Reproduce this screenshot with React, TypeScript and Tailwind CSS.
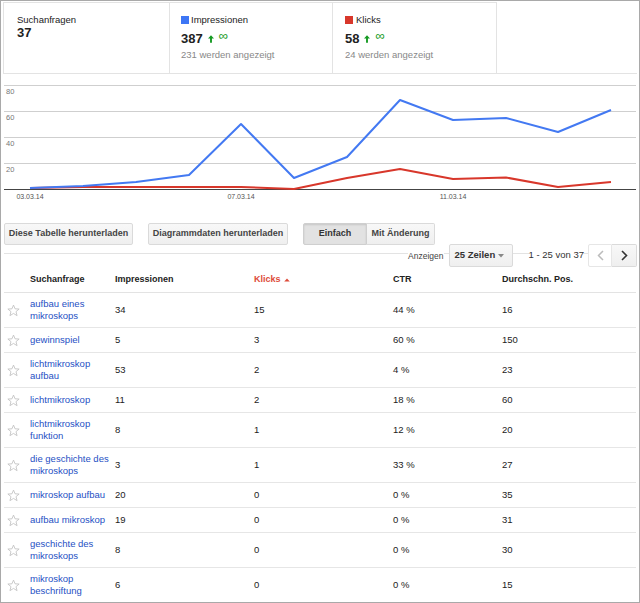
import React from 'react';

const font = "font-['Liberation_Sans',Arial,sans-serif]";

type Row = { q: string[]; imp: number; clicks: number; ctr: string; pos: number };

const rows: Row[] = [
  { q: ['aufbau eines', 'mikroskops'], imp: 34, clicks: 15, ctr: '44 %', pos: 16 },
  { q: ['gewinnspiel'], imp: 5, clicks: 3, ctr: '60 %', pos: 150 },
  { q: ['lichtmikroskop', 'aufbau'], imp: 53, clicks: 2, ctr: '4 %', pos: 23 },
  { q: ['lichtmikroskop'], imp: 11, clicks: 2, ctr: '18 %', pos: 60 },
  { q: ['lichtmikroskop', 'funktion'], imp: 8, clicks: 1, ctr: '12 %', pos: 20 },
  { q: ['die geschichte des', 'mikroskops'], imp: 3, clicks: 1, ctr: '33 %', pos: 27 },
  { q: ['mikroskop aufbau'], imp: 20, clicks: 0, ctr: '0 %', pos: 35 },
  { q: ['aufbau mikroskop'], imp: 19, clicks: 0, ctr: '0 %', pos: 31 },
  { q: ['geschichte des', 'mikroskops'], imp: 8, clicks: 0, ctr: '0 %', pos: 30 },
  { q: ['mikroskop', 'beschriftung'], imp: 6, clicks: 0, ctr: '0 %', pos: 15 },
];

function Star() {
  return (
    <svg width="13" height="13" viewBox="0 0 24 24" fill="none" stroke="#c2c2c2" strokeWidth="1.6" strokeLinejoin="round">
      <polygon points="12,2 14.9,8.9 22.4,9.3 16.6,14.1 18.6,21.5 12,17.4 5.4,21.5 7.4,14.1 1.6,9.3 9.1,8.9" />
    </svg>
  );
}

function Trend() {
  return (
    <span className="ml-[5px] inline-flex items-start text-[#159a22]">
      <svg width="6" height="8" viewBox="0 0 7 9" className="mt-[4px]">
        <path d="M3.5 0 L7 4 H4.6 V9 H2.4 V4 H0 Z" fill="#159a22" />
      </svg>
      <span className="ml-[5px] text-[13px] leading-[10px] font-normal">∞</span>
    </span>
  );
}

function Chart() {
  const xs = [30, 83, 136, 189, 241, 294, 347, 400, 453, 506, 558, 611];
  const blue = [187, 185, 181, 174, 123, 177, 156, 99, 119, 117, 131, 109];
  const red = [187, 186, 186, 186, 186, 188, 177, 168, 178, 176.5, 186, 181];
  const pts = (ys: number[]) => xs.map((x, i) => `${x},${ys[i]}`).join(' ');
  const labels = [
    { v: '80', y: 84 },
    { v: '60', y: 110 },
    { v: '40', y: 136 },
    { v: '20', y: 162 },
  ];
  return (
    <svg width="638" height="132" viewBox="1 73 638 132" className="block" fontFamily="Liberation Sans, Arial, sans-serif">
      {labels.map((l) => (
        <g key={l.v}>
          <line x1="4" x2="636" y1={l.y + 0.5} y2={l.y + 0.5} stroke="#cfcfcf" />
          <text x="6" y={l.y + 9} fontSize="7.5" fill="#777">{l.v}</text>
        </g>
      ))}
      <line x1="4" x2="636" y1="188.5" y2="188.5" stroke="#444" />
      <polyline points={pts(red)} fill="none" stroke="#d8372b" strokeWidth="2" strokeLinejoin="round" />
      <polyline points={pts(blue)} fill="none" stroke="#4379f2" strokeWidth="2" strokeLinejoin="round" />
      {[
        { x: 30, t: '03.03.14' },
        { x: 241, t: '07.03.14' },
        { x: 453, t: '11.03.14' },
      ].map((d) => (
        <text key={d.t} x={d.x} y="198" fontSize="7" fill="#555" textAnchor="middle">{d.t}</text>
      ))}
    </svg>
  );
}

const grid = 'grid grid-cols-[26px_85px_139px_139px_109px_1fr] items-center';
const btn = 'h-[22px] rounded-[2px] border border-[#dadada] bg-gradient-to-b from-[#f8f8f8] to-[#efefef] text-[#444] whitespace-nowrap';

export default function App() {
  return (
    <div className={`w-[640px] h-[603px] overflow-hidden border border-[#a9a9a9] bg-white ${font}`}>
      <div className="flex mt-px mx-[2px] border-b border-[#e3e3e3] h-[72px]">
        <div className="w-[167px] h-[71px] border border-b-0 border-[#e3e3e3] pl-[13px] pt-[11px]">
          <div className="text-[9.5px] leading-[12px] text-[#222]">Suchanfragen</div>
          <div className="text-[13px] leading-[14px] font-bold text-[#222]">37</div>
        </div>
        <div className="w-[163px] h-[71px] border-t border-r border-[#e3e3e3] pl-[11px] pt-[11px]">
          <div className="flex items-center text-[9.5px] leading-[12px] text-[#222]">
            <span className="w-[8px] h-[8px] bg-[#3d76f5] mr-[2px]" />
            Impressionen
          </div>
          <div className="flex items-start mt-[5px] text-[13px] leading-[15px] font-bold text-[#222]">
            387
            <Trend />
          </div>
          <div className="mt-[2px] text-[9.5px] leading-[14px] text-[#888]">231 werden angezeigt</div>
        </div>
        <div className="w-[164px] h-[71px] border-t border-r border-[#e3e3e3] pl-[12px] pt-[11px]">
          <div className="flex items-center text-[9.5px] leading-[12px] text-[#222]">
            <span className="w-[8px] h-[8px] bg-[#d8372b] mr-[3px]" />
            Klicks
          </div>
          <div className="flex items-start mt-[5px] text-[13px] leading-[15px] font-bold text-[#222]">
            58
            <Trend />
          </div>
          <div className="mt-[2px] text-[9.5px] leading-[14px] text-[#888]">24 werden angezeigt</div>
        </div>
      </div>

      <Chart />

      <div className="flex mt-[17px] h-[21px] text-[9px] font-bold">
        <button className={`ml-[3px] w-[129px] ${btn}`}>Diese Tabelle herunterladen</button>
        <button className={`ml-[15px] w-[140px] ${btn}`}>Diagrammdaten herunterladen</button>
        <div className="ml-[15px] flex">
          <button className="w-[64px] h-[22px] rounded-l-[2px] border border-[#cfcfcf] bg-[#e2e2e2] shadow-[inset_0_1px_2px_rgba(0,0,0,0.12)] text-[#333]">
            Einfach
          </button>
          <button className={`w-[68px] rounded-l-none border-l-0 ${btn}`}>Mit Änderung</button>
        </div>
      </div>

      <div className="relative h-[24px] flex items-start justify-end pr-[2px]">
        <div className="absolute left-[3px] right-[2px] top-[9px] h-px bg-[#e3e3e3]" />
        <span className="relative bg-white mt-[5px] mr-[5px] text-[8.5px] leading-[14px] text-[#444]">Anzeigen</span>
        <div className="relative w-[64px] h-[23px] flex items-center justify-between pl-[5px] pr-[8px] rounded-[2px] border border-[#dadada] bg-gradient-to-b from-[#f8f8f8] to-[#efefef] text-[9.5px] font-bold text-[#333]">
          25 Zeilen
          <svg width="6" height="4" viewBox="0 0 6 4">
            <path d="M0 0 H6 L3 3.5 Z" fill="#888" />
          </svg>
        </div>
        <span className="relative bg-white ml-[16px] mr-[4px] mt-[4px] text-[9.5px] leading-[14px] text-[#333]">1 - 25 von 37</span>
        <div className="relative w-[24px] h-[23px] flex items-center justify-center rounded-l-[2px] border border-[#e6e6e6] bg-white">
          <svg width="7" height="11" viewBox="0 0 7 11">
            <path d="M6 1 L1.5 5.5 L6 10" fill="none" stroke="#bbb" strokeWidth="1.5" />
          </svg>
        </div>
        <div className="relative w-[25px] h-[23px] flex items-center justify-center rounded-r-[2px] border border-l-0 border-[#dadada] bg-gradient-to-b from-[#f8f8f8] to-[#efefef]">
          <svg width="7" height="11" viewBox="0 0 7 11">
            <path d="M1 1 L5.5 5.5 L1 10" fill="none" stroke="#333" strokeWidth="1.6" />
          </svg>
        </div>
      </div>

      <div className="mx-[3px]">
        <div className={`${grid} h-[25px] border-b border-[#e3e3e3] text-[9px] font-bold text-[#222]`}>
          <span />
          <span>Suchanfrage</span>
          <span>Impressionen</span>
          <span className="flex items-center text-[#dd4b39]">
            Klicks
            <svg width="6" height="4" viewBox="0 0 7 5" className="ml-[3px]">
              <path d="M0 4.5 L3.5 0.5 L7 4.5 Z" fill="#dd4b39" />
            </svg>
          </span>
          <span>CTR</span>
          <span>Durchschn. Pos.</span>
        </div>
        {rows.map((r, idx) => (
          <div
            key={idx}
            className={`${grid} ${r.q.length > 1 ? 'h-[35px]' : 'h-[25px]'} border-b border-[#e6e6e6] text-[9.5px] leading-[12px] text-[#222]`}
          >
            <span className="flex items-center pl-[3px]">
              <Star />
            </span>
            <span className="text-[#2650c4]">
              {r.q.map((line) => (
                <span key={line} className="block whitespace-nowrap">{line}</span>
              ))}
            </span>
            <span>{r.imp}</span>
            <span>{r.clicks}</span>
            <span>{r.ctr}</span>
            <span>{r.pos}</span>
          </div>
        ))}
      </div>
    </div>
  );
}
